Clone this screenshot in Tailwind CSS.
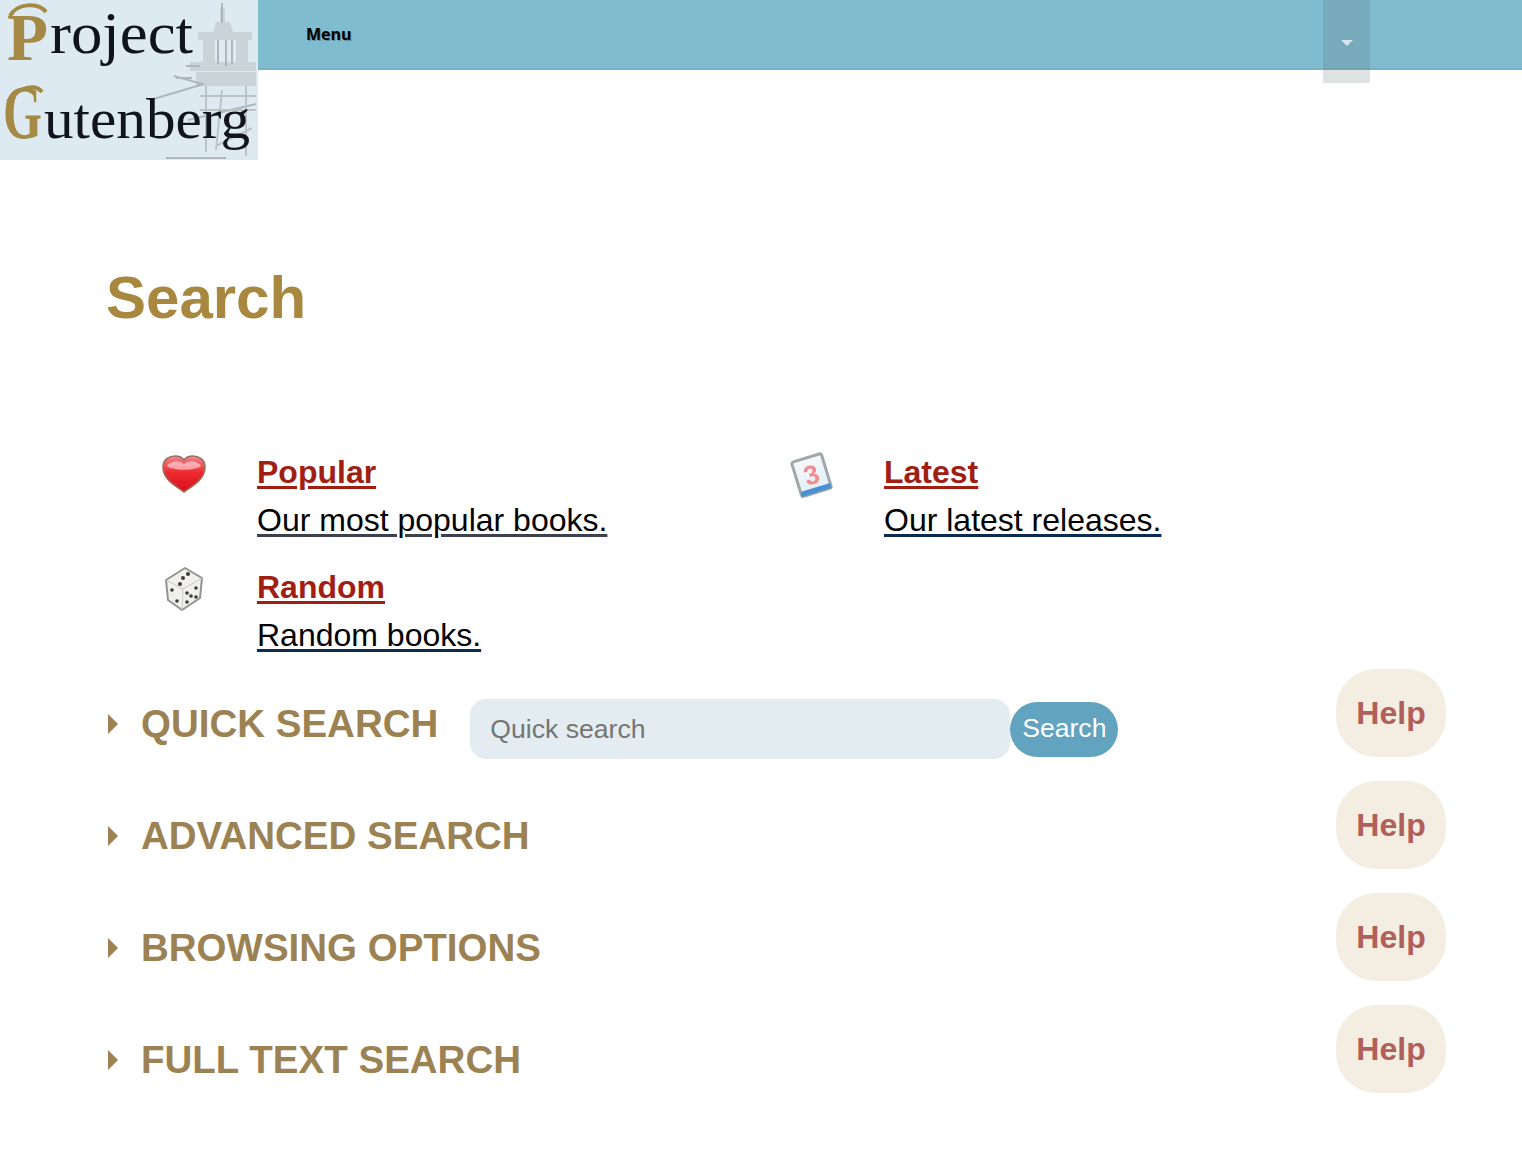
<!DOCTYPE html>
<html lang="en">
<head>
    <meta charset="UTF-8">
    <meta name="viewport" content="width=device-width, initial-scale=1.0">
    <title>Search | Project Gutenberg</title>
    <script src="https://cdn.jsdelivr.net/npm/@tailwindcss/browser@4"></script>
</head>
<body class="bg-white font-['Liberation_Sans',Arial,sans-serif] overflow-x-hidden">

    <!-- Header -->
    <header class="flex h-[160px]">
        <a href="#" class="block w-[258px] h-[160px] shrink-0 bg-[#deeaf1] overflow-hidden">
            <svg width="258" height="160" viewBox="0 0 258 160" class="blur-[0.5px]">
                <!-- printing press -->
                <g fill="#b9c0c3" opacity=".55">
                    <path d="M198 32h54v8h-54zM203 40h12v26h-12zM236 40h12v26h-12zM190 62h66v9h-66zM196 72h60v14h-60z"/>
                    <path d="M216 22h14l3 10h-20zM220 8h5v14h-5z"/>
                </g>
                <g fill="none" stroke="#a9b0b4" stroke-width="2" opacity=".85">
                    <path d="M222 3v20M218 40v24M226 40v26M232 40v24"/>
                    <path d="M174 76l28 8M176 78h16M186 66h14M150 100l54-16M188 120l68-16M166 158h60"/>
                    <path d="M206 86v66M246 86v70M200 96h56M200 110h56M222 90l-6 60M252 128l-36 18" stroke="#b7bdc0"/>
                </g>
                <!-- logo lettering -->
                <path d="M10 16C16 4 38 1 46 12" fill="none" stroke="#a48a45" stroke-width="4"/>
                <text x="7" y="60" font-family="'Liberation Serif',serif" font-weight="700" font-size="67" fill="#a48a45" textLength="41" lengthAdjust="spacingAndGlyphs">P</text>
                <text x="50" y="53" font-family="'Liberation Serif',serif" font-size="59" fill="#10141c" textLength="143" lengthAdjust="spacingAndGlyphs">roject</text>
                <path d="M8 102C14 90 34 82 42 92" fill="none" stroke="#a48a45" stroke-width="4"/>
                <text transform="translate(3 138) scale(.65 1)" font-family="'Liberation Serif',serif" font-weight="700" font-size="77" fill="#a48a45">G</text>
                <text x="44" y="138" font-family="'Liberation Serif',serif" font-size="56" fill="#10141c" textLength="206" lengthAdjust="spacingAndGlyphs">utenberg</text>
            </svg>
        </a>
        <nav class="flex-1 h-[70px] bg-[#7fbcd0] border-b-2 border-[#78b1c5] flex items-start justify-between">
            <a href="#" class="ml-[48px] mt-[23px] font-['Open_Sans',sans-serif] font-bold text-[16px] leading-[22px] text-black [text-shadow:1px_1px_0_#5f8a99]">Menu</a>
            <button class="mr-[152px] w-[47px] h-[83px] shrink-0 bg-[#5f6f6f]/20 flex justify-center pt-[40px]">
                <span class="w-0 h-0 border-x-[6px] border-x-transparent border-t-[6px] border-t-[#d4e6ec]"></span>
            </button>
        </nav>
    </header>

    <main class="px-[107px]">
        <h1 class="mt-[103px] mb-[115px] -ml-px text-[60px] leading-[70px] font-bold text-[#a8883f]">Search</h1>

        <!-- Shortcut links -->
        <div class="grid grid-cols-[627px_1fr] gap-y-[19px] text-[32px] leading-[48px]">
            <div class="flex">
                <div class="w-[150px] h-[48px] shrink-0 pl-[55px] pt-[7px]">
                    <svg width="44" height="38" viewBox="0 0 44 38" class="blur-[0.3px]">
                        <defs>
                            <linearGradient id="heart" x1="0" y1="0" x2="0" y2="1">
                                <stop offset="0" stop-color="#f08a92"/>
                                <stop offset="0.45" stop-color="#ee2a30"/>
                                <stop offset="1" stop-color="#d9101a"/>
                            </linearGradient>
                        </defs>
                        <path d="M22 37C14 31 1 25 1 12 1 4 8 1 13 1c4 0 7 1 9 4 2-3 5-4 9-4 5 0 12 3 12 11 0 13-13 19-21 25z" fill="url(#heart)" stroke="#98735f" stroke-width="1.6"/>
                        <path d="M5 11c3-5 12-6 17-2 5-4 14-3 17 2-6 5-28 5-34 0z" fill="#fff" opacity=".5"/>
                    </svg>
                </div>
                <div>
                    <a href="#" class="block w-fit font-bold text-[#a11e12] underline decoration-[3px] underline-offset-[3px]">Popular</a>
                    <a href="#" class="block w-fit text-black underline decoration-[3px] decoration-[#3d414d] underline-offset-[3px]">Our most popular books.</a>
                </div>
            </div>
            <div class="flex">
                <div class="w-[150px] h-[48px] shrink-0 pl-[56px] pt-[4px]">
                    <svg width="44" height="46" viewBox="0 0 44 46" class="blur-[0.4px]">
                        <defs>
                            <linearGradient id="page" x1="0" y1="0" x2="0" y2="1">
                                <stop offset="0" stop-color="#f6f9fa"/>
                                <stop offset="1" stop-color="#dfeef5"/>
                            </linearGradient>
                        </defs>
                        <g transform="rotate(-17 22 23)">
                            <rect x="6" y="5" width="31" height="36" rx="2" fill="url(#page)" stroke="#a0a8aa" stroke-width="3"/>
                            <rect x="6" y="36" width="31" height="5" fill="#4a90d0"/>
                            <text x="21.5" y="32" text-anchor="middle" font-family="'Liberation Sans',sans-serif" font-weight="700" font-size="27" fill="#f28b90">3</text>
                        </g>
                    </svg>
                </div>
                <div>
                    <a href="#" class="block w-fit font-bold text-[#a11e12] underline decoration-[3px] underline-offset-[3px]">Latest</a>
                    <a href="#" class="block w-fit text-black underline decoration-[3px] decoration-[#0d2a52] underline-offset-[3px]">Our latest releases.</a>
                </div>
            </div>
            <div class="flex">
                <div class="w-[150px] h-[48px] shrink-0 pl-[58px] pt-[4px]">
                    <svg width="38" height="44" viewBox="0 0 38 44" class="blur-[0.3px]">
                        <path d="M20 1 37 11 35 31 17 43 3 33 1 13z" fill="#f1f0ea" stroke="#8f9494" stroke-width="2" stroke-linejoin="round"/>
                        <path d="M1 13 18 22 37 11M18 22 17 43" fill="none" stroke="#c9cbc7" stroke-width="1"/>
                        <g fill="#3a3c3e">
                            <circle cx="23" cy="7" r="2"/><circle cx="18" cy="11" r="2"/><circle cx="15" cy="17" r="2"/>
                            <circle cx="7" cy="23" r="1.8"/><circle cx="12" cy="34" r="1.8"/>
                            <circle cx="22" cy="26" r="1.8"/><circle cx="31" cy="21" r="1.8"/><circle cx="26" cy="29" r="1.8"/><circle cx="22" cy="35" r="1.8"/><circle cx="31" cy="30" r="1.8"/>
                        </g>
                    </svg>
                </div>
                <div>
                    <a href="#" class="block w-fit font-bold text-[#a11e12] underline decoration-[3px] underline-offset-[3px]">Random</a>
                    <a href="#" class="block w-fit text-black underline decoration-[3px] decoration-[#0d2a52] underline-offset-[3px]">Random books.</a>
                </div>
            </div>
        </div>

        <!-- Search sections -->
        <div class="mt-[10px] mr-[-31px]">
            <section class="flex items-start justify-between h-[112px]">
                <div class="flex items-start">
                    <div class="flex items-center h-[88px] pt-[22px]">
                        <span class="w-0 h-0 border-y-[10px] border-y-transparent border-l-[10px] border-l-[#9c8252] ml-[1px] mr-[23px]"></span>
                        <h2 class="text-[38.5px] leading-[44px] font-bold text-[#9c8252]">QUICK SEARCH</h2>
                    </div>
                    <div class="flex items-center ml-[32px] mt-[30px]">
                        <input type="text" placeholder="Quick search" class="w-[540px] h-[60px] px-[20px] rounded-[16px] bg-[#e3edf1] text-[26.6px] placeholder:text-[#757575] outline-none">
                        <button class="w-[108px] h-[55px] rounded-full bg-[#62a3bf] text-white text-[26.6px]">Search</button>
                    </div>
                </div>
                <a href="#" class="flex items-center justify-center w-[110px] h-[88px] rounded-[40px] bg-[#f4eee2] text-[32px] font-bold text-[#b0605a]">Help</a>
            </section>
            <section class="flex items-start justify-between h-[112px]">
                <div class="flex items-center h-[88px] pt-[22px]">
                    <span class="w-0 h-0 border-y-[10px] border-y-transparent border-l-[10px] border-l-[#9c8252] ml-[1px] mr-[23px]"></span>
                    <h2 class="text-[38.5px] leading-[44px] font-bold text-[#9c8252]">ADVANCED SEARCH</h2>
                </div>
                <a href="#" class="flex items-center justify-center w-[110px] h-[88px] rounded-[40px] bg-[#f4eee2] text-[32px] font-bold text-[#b0605a]">Help</a>
            </section>
            <section class="flex items-start justify-between h-[112px]">
                <div class="flex items-center h-[88px] pt-[22px]">
                    <span class="w-0 h-0 border-y-[10px] border-y-transparent border-l-[10px] border-l-[#9c8252] ml-[1px] mr-[23px]"></span>
                    <h2 class="text-[38.5px] leading-[44px] font-bold text-[#9c8252]">BROWSING OPTIONS</h2>
                </div>
                <a href="#" class="flex items-center justify-center w-[110px] h-[88px] rounded-[40px] bg-[#f4eee2] text-[32px] font-bold text-[#b0605a]">Help</a>
            </section>
            <section class="flex items-start justify-between h-[112px]">
                <div class="flex items-center h-[88px] pt-[22px]">
                    <span class="w-0 h-0 border-y-[10px] border-y-transparent border-l-[10px] border-l-[#9c8252] ml-[1px] mr-[23px]"></span>
                    <h2 class="text-[38.5px] leading-[44px] font-bold text-[#9c8252]">FULL TEXT SEARCH</h2>
                </div>
                <a href="#" class="flex items-center justify-center w-[110px] h-[88px] rounded-[40px] bg-[#f4eee2] text-[32px] font-bold text-[#b0605a]">Help</a>
            </section>
        </div>
    </main>

</body>
</html>
